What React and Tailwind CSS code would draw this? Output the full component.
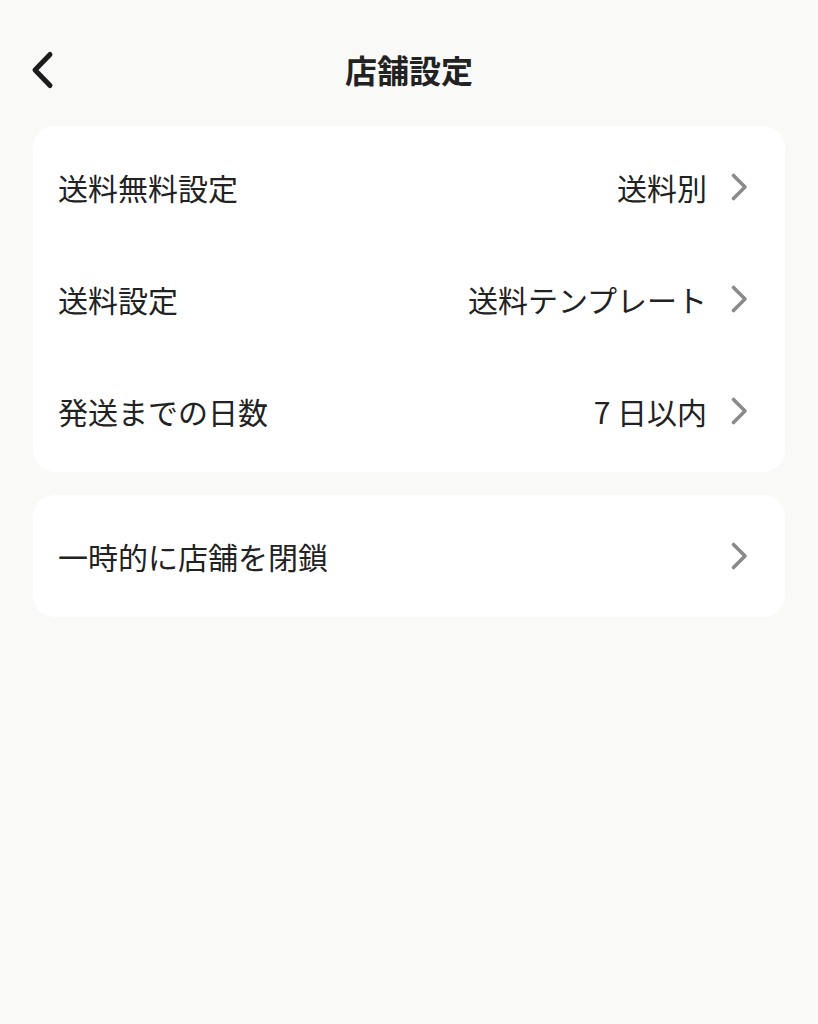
const shippingRows = [
  { label: "送料無料設定", value: "送料別" },
  { label: "送料設定", value: "送料テンプレート" },
  { label: "発送までの日数", value: "7 日以内" },
];

function Chevron() {
  return (
    <svg width="20" height="30" viewBox="0 0 20 30" className="ml-[23px] shrink-0">
      <polyline
        points="3.5,3.5 15,15 3.5,26.5"
        fill="none"
        stroke="#8a8a8a"
        strokeWidth="3.6"
        strokeLinecap="round"
        strokeLinejoin="round"
      />
    </svg>
  );
}

function Row({ label, value }) {
  return (
    <button className="flex h-[112px] w-full items-center justify-between pl-[25px] pr-[35px] text-left">
      <span className="text-[30px] text-[#222222]">{label}</span>
      <span className="flex items-center">
        {value && <span className="text-[30px] text-[#222222]">{value}</span>}
        <Chevron />
      </span>
    </button>
  );
}

export default function App() {
  return (
    <main
      className="min-h-screen bg-[#f9f9f7]"
      style={{ fontFamily: '"Noto Sans CJK JP", "Noto Sans", sans-serif' }}
    >
      <header className="relative flex h-[126px] items-center justify-center pt-[12px]">
        <button className="absolute left-[28px] top-[50px]">
          <svg width="26" height="40" viewBox="0 0 26 40">
            <polyline
              points="22,4.5 7,20 22,35.5"
              fill="none"
              stroke="#1c1c1c"
              strokeWidth="5"
              strokeLinecap="round"
              strokeLinejoin="round"
            />
          </svg>
        </button>
        <h1 className="text-[32px] font-bold text-[#222222]">店舗設定</h1>
      </header>

      <div className="flex flex-col gap-[23px] px-[33px]">
        <section className="rounded-[22px] bg-white py-[5px]">
          {shippingRows.map((row) => (
            <Row key={row.label} label={row.label} value={row.value} />
          ))}
        </section>

        <section className="rounded-[22px] bg-white py-[5px]">
          <Row label="一時的に店舗を閉鎖" />
        </section>
      </div>
    </main>
  );
}
